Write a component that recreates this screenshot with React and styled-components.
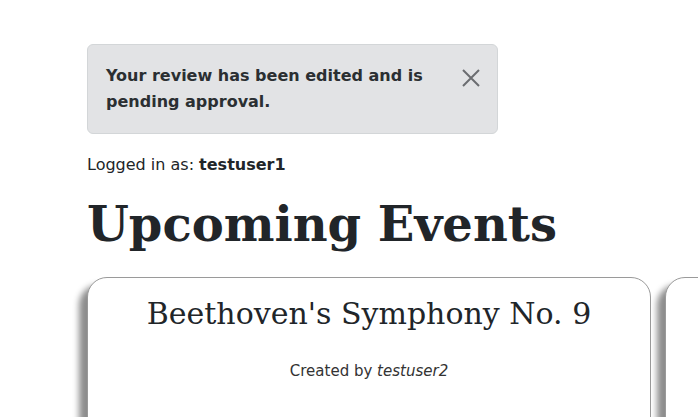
import React from "react";
import styled, { createGlobalStyle } from "styled-components";

const Global = createGlobalStyle`
  html, body { margin: 0; padding: 0; overflow: hidden; background: #fff; }
  body { font-family: "DejaVu Sans", "Open Sans", sans-serif; color: #212529; }
`;

const Page = styled.main`
  width: 698px;
  height: 417px;
  overflow: hidden;
  padding: 44px 0 0 87px;
  box-sizing: border-box;
`;

const Alert = styled.div`
  width: 411px;
  box-sizing: border-box;
  display: flex;
  align-items: flex-start;
  justify-content: space-between;
  padding: 18px 16px 18px 18px;
  background: #e2e3e5;
  border: 1px solid #d3d6d8;
  border-radius: 6px;
  color: #2b2f32;
  font-weight: 700;
  font-size: 16px;
  line-height: 26px;
`;

const AlertText = styled.p`
  margin: 0;
  width: 340px;
`;

const CloseButton = styled.button`
  border: 0;
  background: transparent;
  padding: 0;
  margin-top: 5px;
  width: 20px;
  height: 20px;
  display: flex;
  cursor: pointer;
`;

const Logged = styled.p`
  margin: 21px 0 0;
  font-size: 16px;
  font-weight: 400;
  line-height: 20px;
  color: #212529;
  strong { font-weight: 700; }
`;

const Heading = styled.h1`
  margin: 18px 0 0;
  font-family: "DejaVu Serif", "Liberation Serif", serif;
  font-weight: 700;
  font-size: 48px;
  line-height: 62px;
  color: #212529;
  white-space: nowrap;
`;

const CardRow = styled.div`
  display: flex;
  gap: 14px;
  margin-top: 22px;
`;

const Card = styled.section`
  flex: 0 0 564px;
  box-sizing: border-box;
  min-height: 220px;
  border: 1px solid #9a9a9a;
  border-radius: 20px;
  background: #fff;
  box-shadow: -8px 8px 6px rgba(0, 0, 0, 0.45);
  text-align: center;
  padding-top: 14px;
`;

const CardTitle = styled.h2`
  margin: 0;
  font-family: "DejaVu Serif", "Liberation Serif", serif;
  font-weight: 400;
  font-size: 30px;
  line-height: 44px;
  color: #212529;
`;

const Creator = styled.p`
  margin: 25px 0 0;
  font-size: 15px;
  line-height: 20px;
  color: #333;
  em { font-style: italic; }
`;

export default function App() {
  return (
    <>
      <Global />
      <Page>
        <Alert role="alert">
          <AlertText>Your review has been edited and is pending approval.</AlertText>
          <CloseButton aria-label="Close">
            <svg width="20" height="20" viewBox="0 0 20 20">
              <path d="M2 2 L18 18 M18 2 L2 18" stroke="#6b6d70" strokeWidth="2" fill="none" />
            </svg>
          </CloseButton>
        </Alert>
        <Logged>
          Logged in as: <strong>testuser1</strong>
        </Logged>
        <Heading>Upcoming Events</Heading>
        <CardRow>
          <Card>
            <CardTitle>Beethoven's Symphony No. 9</CardTitle>
            <Creator>
              Created by <em>testuser2</em>
            </Creator>
          </Card>
          <Card />
        </CardRow>
      </Page>
    </>
  );
}
